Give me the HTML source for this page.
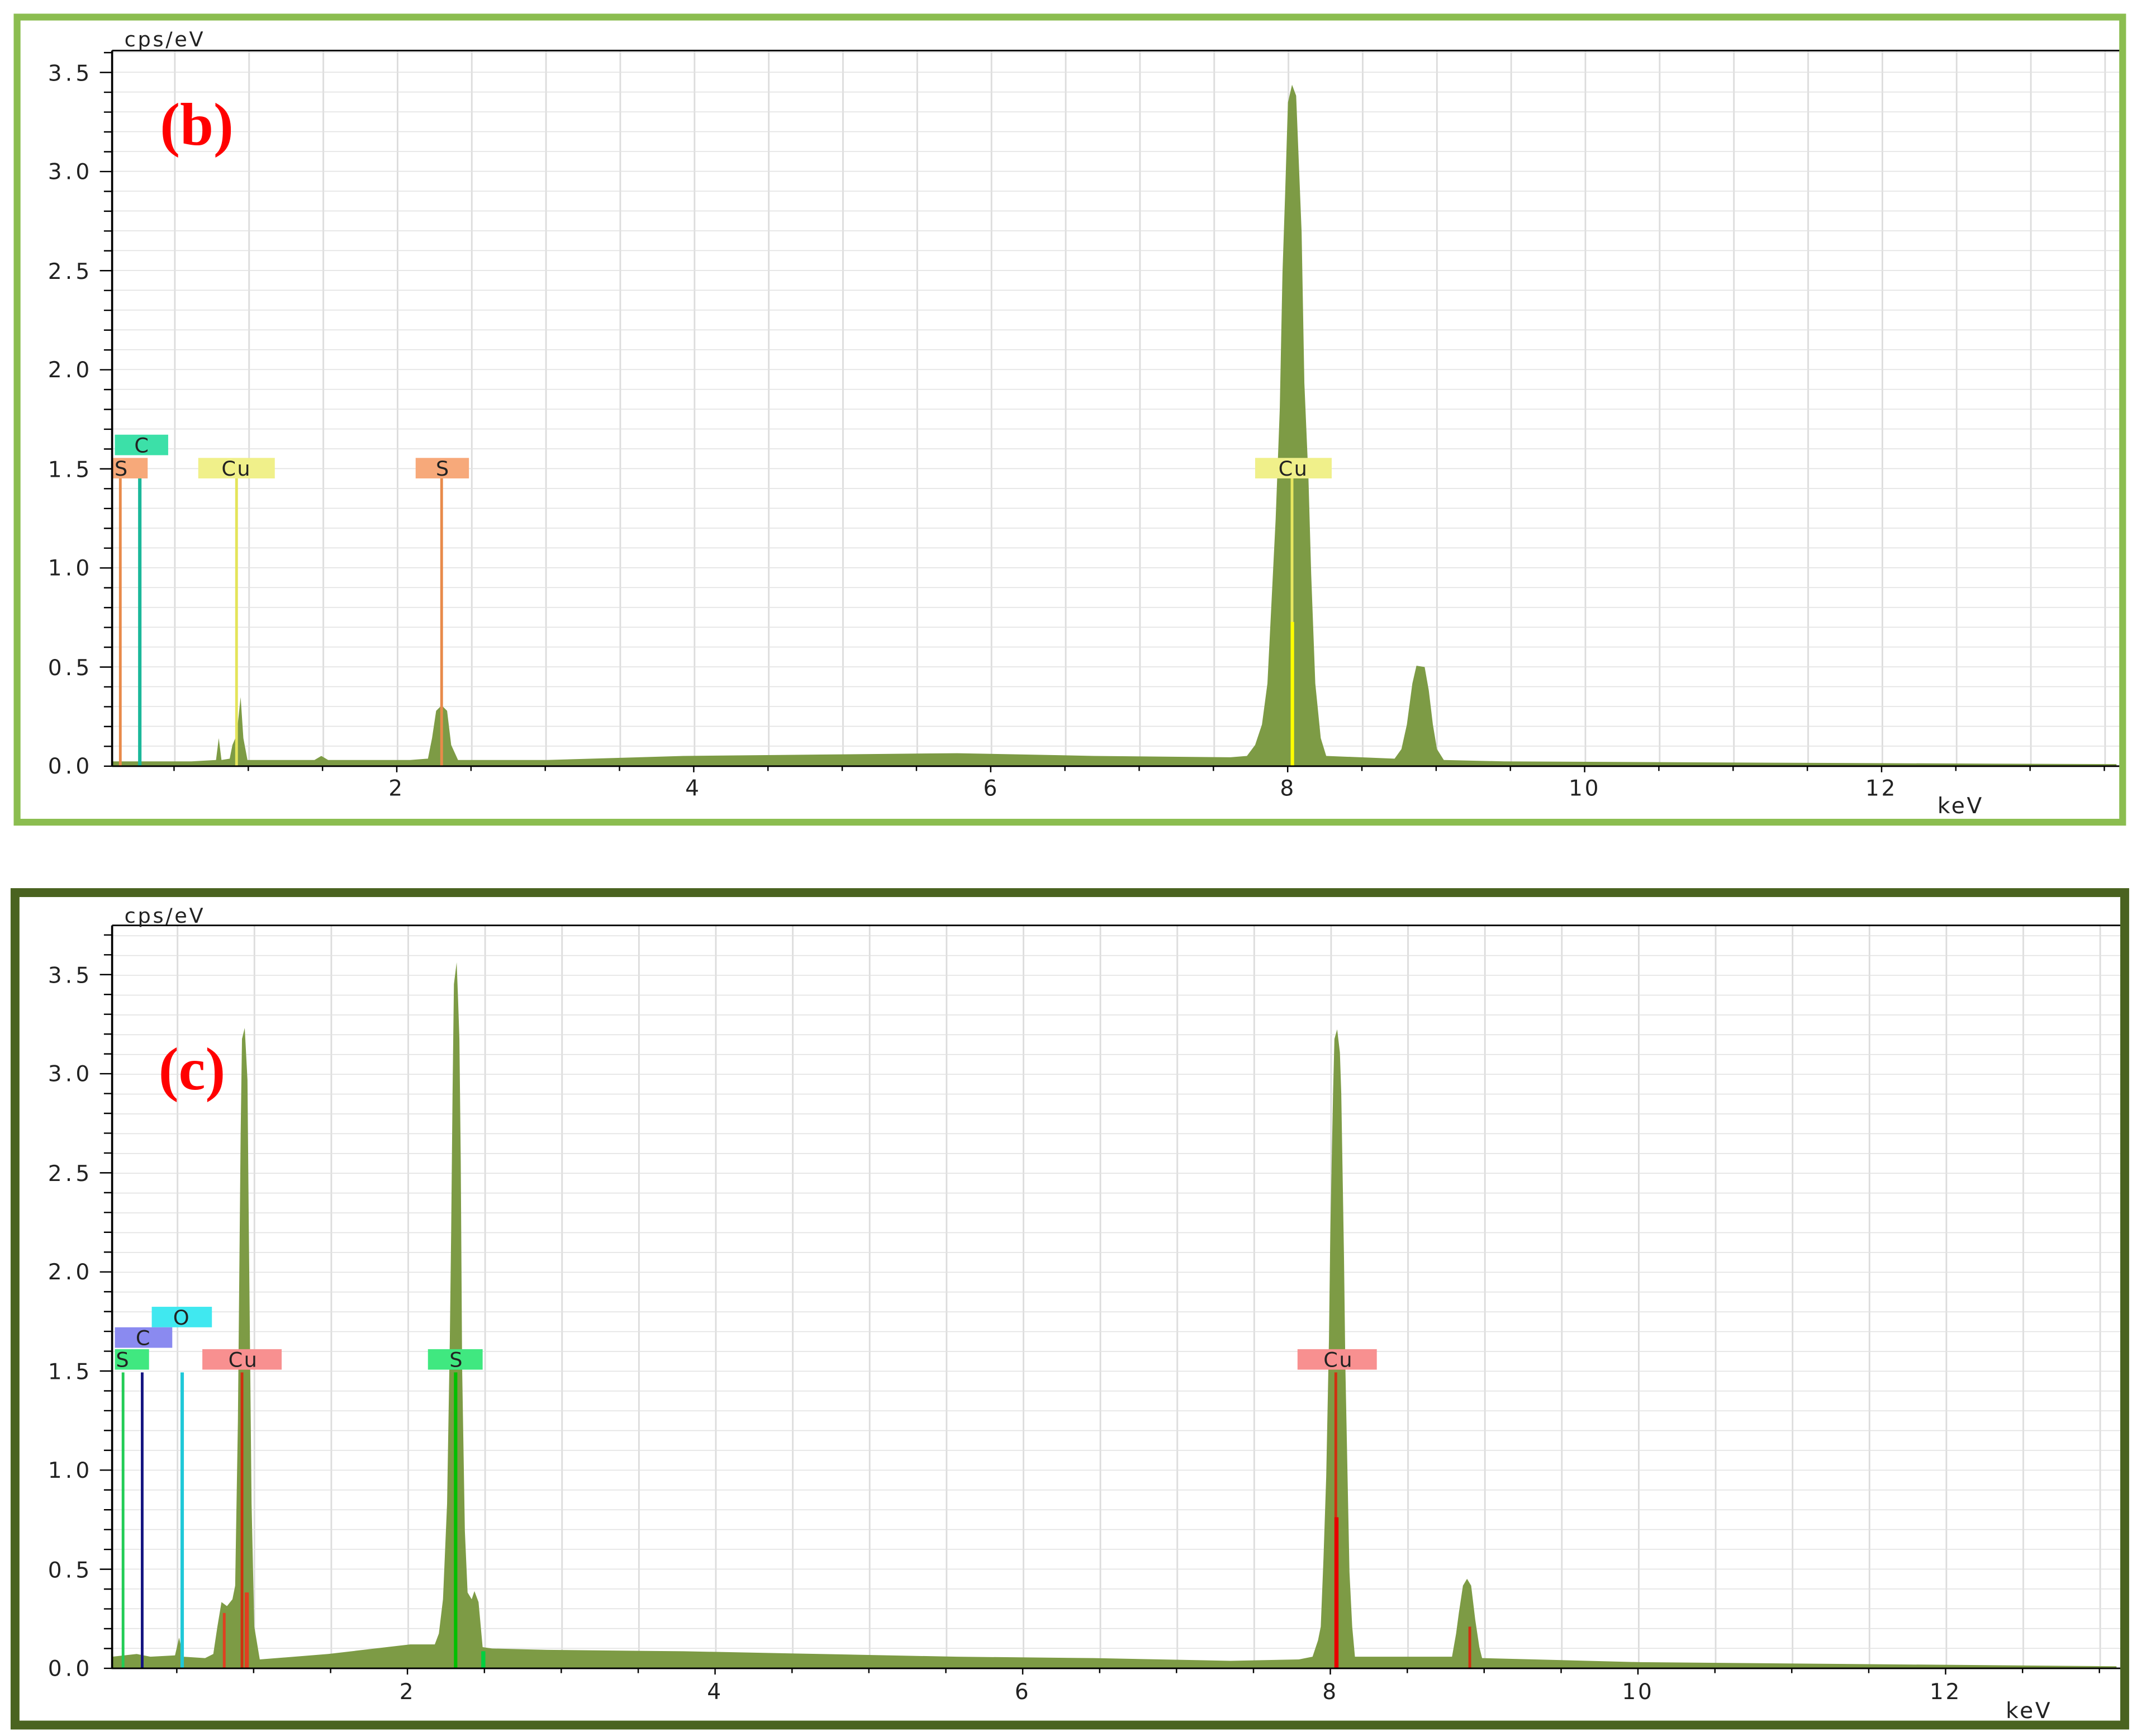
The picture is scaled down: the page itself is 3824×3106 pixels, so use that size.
<!DOCTYPE html>
<html><head><meta charset="utf-8"><style>html,body{margin:0;padding:0;background:#fff}svg{display:block}</style></head>
<body>
<svg width="3824" height="3106" viewBox="0 0 1563 1270" preserveAspectRatio="none" xmlns="http://www.w3.org/2000/svg" font-family="'DejaVu Sans','Liberation Sans',sans-serif">
<defs>
<pattern id="gt" patternUnits="userSpaceOnUse" x="73" y="560" width="54.3" height="14.5"><line x1="0.5" y1="0" x2="0.5" y2="14.5" stroke="#dcdcdc" stroke-width="1.3"/><line x1="0" y1="0.3" x2="54.3" y2="0.3" stroke="#e2e2e2" stroke-width="0.7"/></pattern>
<pattern id="gb" patternUnits="userSpaceOnUse" x="73" y="1220" width="56.25" height="14.48"><line x1="0.5" y1="0" x2="0.5" y2="14.48" stroke="#dcdcdc" stroke-width="1.3"/><line x1="0" y1="0.3" x2="56.25" y2="0.3" stroke="#e2e2e2" stroke-width="0.7"/></pattern>
</defs>
<rect x="0" y="0" width="1563" height="1270" fill="#fff"/>

<!-- TOP PANEL -->
<rect x="82" y="37" width="1470" height="523" fill="url(#gt)"/>
<path fill="#7D9B45" d="M82,560 L82,557 L140,557 L158,556 L160,540 L162,556 L168,555 L170,545 L173,538 L176,510 L178,540 L181,556 L230,556 L235,553 L240,556 L300,556 L313,555 L316,540 L319,520 L323,516 L327,520 L330,545 L335,556 L400,556 L500,553 L600,552 L700,551 L800,553 L900,554 L912,553 L918,545 L923,530 L927,500 L930,440 L933,380 L936,300 L938,200 L940,140 L942,75 L945,62 L948,70 L950,120 L952,170 L954,280 L957,350 L959,420 L962,500 L966,540 L970,553 L1020,555 L1025,548 L1029,530 L1033,500 L1036,487 L1042,488 L1045,505 L1048,530 L1051,548 L1056,556 L1100,557 L1300,558 L1548,559 L1548,560 Z"/>
<rect x="87" y="350" width="2" height="210" fill="#E88A4A"/>
<rect x="101" y="350" width="2.5" height="210" fill="#1BB89A"/>
<rect x="172" y="350" width="2" height="210" fill="#E4E45A"/>
<rect x="322" y="350" width="2" height="210" fill="#E88A4A"/>
<rect x="944" y="350" width="2" height="210" fill="#E8E860"/>
<rect x="944" y="455" width="2.5" height="105" fill="#FFFF00"/>
<g font-size="15" text-anchor="middle" fill="#222" letter-spacing="1">
<rect x="84" y="318" width="39" height="15" fill="#3CE0A8"/><text x="104" y="331">C</text>
<rect x="82" y="335" width="26" height="15" fill="#F7A97A"/><text x="89" y="348">S</text>
<rect x="145" y="335" width="56" height="15" fill="#F0F08A"/><text x="173" y="348">Cu</text>
<rect x="304" y="335" width="39" height="15" fill="#F7A97A"/><text x="324" y="348">S</text>
<rect x="918" y="335" width="56" height="15" fill="#F0F08A"/><text x="946" y="348">Cu</text>
</g>
<line x1="82" y1="37" x2="1552" y2="37" stroke="#000" stroke-width="1.2"/>
<line x1="82" y1="37" x2="82" y2="561" stroke="#000" stroke-width="1.5"/>
<line x1="82" y1="560.5" x2="1552" y2="560.5" stroke="#000" stroke-width="1.2"/>
<g stroke="#000" stroke-width="1">
<path d="M76,560.5h6M76,546h6M76,531.5h6M76,517h6M76,502.5h6M73,488h9M76,473.5h6M76,459h6M76,444.5h6M76,430h6M73,415.5h9M76,401h6M76,386.5h6M76,372h6M76,357.5h6M73,343h9M76,328.5h6M76,314h6M76,299.5h6M76,285h6M73,270.5h9M76,256h6M76,241.5h6M76,227h6M76,212.5h6M73,198h9M76,183.5h6M76,169h6M76,154.5h6M76,140h6M73,125.5h9M76,111h6M76,96.5h6M76,82h6M76,67.5h6M73,53h9M76,38.5h6"/>
<path d="M127.3,561v3M181.6,561v3M235.9,561v3M290.2,561v4M344.5,561v3M398.8,561v3M453.1,561v3M507.4,561v4M561.7,561v3M616,561v3M670.3,561v3M724.6,561v4M778.9,561v3M833.2,561v3M887.5,561v3M941.8,561v4M996.1,561v3M1050.4,561v3M1104.7,561v3M1159,561v4M1213.3,561v3M1267.6,561v3M1321.9,561v3M1376.2,561v4M1430.5,561v3M1484.8,561v3M1539.1,561v3"/>
</g>
<g font-size="16" fill="#222" text-anchor="end" letter-spacing="2.5">
<text x="68" y="566">0.0</text><text x="68" y="494">0.5</text><text x="68" y="421">1.0</text><text x="68" y="349">1.5</text><text x="68" y="276">2.0</text><text x="68" y="204">2.5</text><text x="68" y="131">3.0</text><text x="68" y="59">3.5</text>
</g>
<g font-size="16" fill="#222" text-anchor="middle" letter-spacing="1.5">
<text x="290" y="582">2</text><text x="507" y="582">4</text><text x="725" y="582">6</text><text x="942" y="582">8</text><text x="1159" y="582">10</text><text x="1376" y="582">12</text>
<text x="1434" y="595">keV</text>
</g>
<text x="91" y="34" font-size="15" fill="#222" letter-spacing="1.5">cps/eV</text>
<text x="117" y="106" font-size="44" font-weight="bold" fill="#FF0000" font-family="'Liberation Serif',serif">(b)</text>
<rect x="12.5" y="12.5" width="1540" height="589" fill="none" stroke="#8BBD50" stroke-width="5"/>

<!-- BOTTOM PANEL -->
<rect x="82" y="677" width="1470" height="543" fill="url(#gb)"/>
<path fill="#7D9B45" d="M82,1220 L82,1212 L100,1210 L110,1212 L128,1211 L131,1198 L134,1212 L150,1213 L156,1210 L159,1190 L162,1172 L166,1175 L170,1170 L172,1160 L174,1040 L176,830 L177,760 L179,752 L181,790 L182,900 L184,1100 L186,1190 L190,1214 L240,1210 L300,1203 L318,1203 L321,1195 L324,1170 L327,1100 L329,980 L330,900 L331,800 L332,720 L334,704 L335,730 L336,760 L337,850 L338,1000 L340,1120 L342,1165 L345,1170 L347,1164 L350,1172 L353,1205 L360,1206 L400,1207 L500,1208 L600,1210 L700,1212 L800,1213 L900,1215 L950,1214 L960,1212 L964,1200 L966,1190 L968,1140 L970,1080 L972,980 L973,900 L975,800 L976,760 L978,753 L980,770 L981,800 L983,920 L984,1000 L986,1100 L987,1150 L989,1190 L991,1212 L1062,1212 L1065,1195 L1067,1180 L1070,1160 L1073,1155 L1076,1160 L1079,1185 L1082,1205 L1084,1213 L1200,1216 L1548,1219 L1548,1220 Z"/>
<rect x="89" y="1004" width="2" height="216" fill="#22CC55"/>
<rect x="103" y="1004" width="2" height="216" fill="#141480"/>
<rect x="132" y="1004" width="2.5" height="216" fill="#20C8D8"/>
<rect x="176" y="1004" width="2" height="216" fill="#D03010"/>
<rect x="179" y="1165" width="3" height="55" fill="#E04020"/>
<rect x="163" y="1180" width="2" height="40" fill="#E04020"/>
<rect x="332" y="1004" width="2.5" height="216" fill="#00C000"/>
<rect x="352" y="1208" width="3" height="12" fill="#00D040"/>
<rect x="976" y="1004" width="2" height="216" fill="#D03010"/>
<rect x="976" y="1110" width="3" height="110" fill="#E80000"/>
<rect x="1074" y="1190" width="2" height="30" fill="#D03010"/>
<g font-size="15" text-anchor="middle" fill="#222" letter-spacing="1">
<rect x="111" y="956" width="44" height="15" fill="#40E8F0"/><text x="133" y="969">O</text>
<rect x="84" y="971" width="42" height="15" fill="#8A8AF0"/><text x="105" y="984">C</text>
<rect x="84" y="987" width="25" height="15" fill="#40E880"/><text x="90" y="1000">S</text>
<rect x="148" y="987" width="58" height="15" fill="#F89090"/><text x="178" y="1000">Cu</text>
<rect x="313" y="987" width="40" height="15" fill="#40E880"/><text x="334" y="1000">S</text>
<rect x="949" y="987" width="58" height="15" fill="#F89090"/><text x="979" y="1000">Cu</text>
</g>
<line x1="82" y1="677" x2="1552" y2="677" stroke="#000" stroke-width="1.2"/>
<line x1="82" y1="677" x2="82" y2="1221" stroke="#000" stroke-width="1.5"/>
<line x1="82" y1="1220.5" x2="1552" y2="1220.5" stroke="#000" stroke-width="1.2"/>
<g stroke="#000" stroke-width="1">
<path d="M76,1220.5h6M76,1206h6M76,1191.5h6M76,1177h6M76,1162.5h6M73,1148h9M76,1133.5h6M76,1119h6M76,1104.5h6M76,1090h6M73,1075.5h9M76,1061h6M76,1046.5h6M76,1032h6M76,1017.5h6M73,1003h9M76,988.5h6M76,974h6M76,959.5h6M76,945h6M73,930.5h9M76,916h6M76,901.5h6M76,887h6M76,872.5h6M73,858h9M76,843.5h6M76,829h6M76,814.5h6M76,800h6M73,785.5h9M76,771h6M76,756.5h6M76,742h6M76,727.5h6M73,713h9M76,698.5h6M76,684h6"/>
<path d="M129.3,1221v3M185.5,1221v3M241.8,1221v3M298,1221v4M354.3,1221v3M410.5,1221v3M466.8,1221v3M523,1221v4M579.3,1221v3M635.5,1221v3M691.8,1221v3M748,1221v4M804.3,1221v3M860.5,1221v3M916.8,1221v3M973,1221v4M1029.3,1221v3M1085.5,1221v3M1141.8,1221v3M1198,1221v4M1254.3,1221v3M1310.5,1221v3M1366.8,1221v3M1423,1221v4M1479.3,1221v3M1535.5,1221v3"/>
</g>
<g font-size="16" fill="#222" text-anchor="end" letter-spacing="2.5">
<text x="68" y="1226">0.0</text><text x="68" y="1154">0.5</text><text x="68" y="1081">1.0</text><text x="68" y="1009">1.5</text><text x="68" y="936">2.0</text><text x="68" y="864">2.5</text><text x="68" y="791">3.0</text><text x="68" y="719">3.5</text>
</g>
<g font-size="16" fill="#222" text-anchor="middle" letter-spacing="1.5">
<text x="298" y="1243">2</text><text x="523" y="1243">4</text><text x="748" y="1243">6</text><text x="973" y="1243">8</text><text x="1198" y="1243">10</text><text x="1423" y="1243">12</text>
<text x="1484" y="1257">keV</text>
</g>
<text x="91" y="675" font-size="15" fill="#222" letter-spacing="1.5">cps/eV</text>
<text x="116" y="797" font-size="44" font-weight="bold" fill="#FF0000" font-family="'Liberation Serif',serif">(c)</text>
<rect x="11" y="653" width="1543" height="609" fill="none" stroke="#4A6320" stroke-width="6.5"/>
</svg>
</body></html>
